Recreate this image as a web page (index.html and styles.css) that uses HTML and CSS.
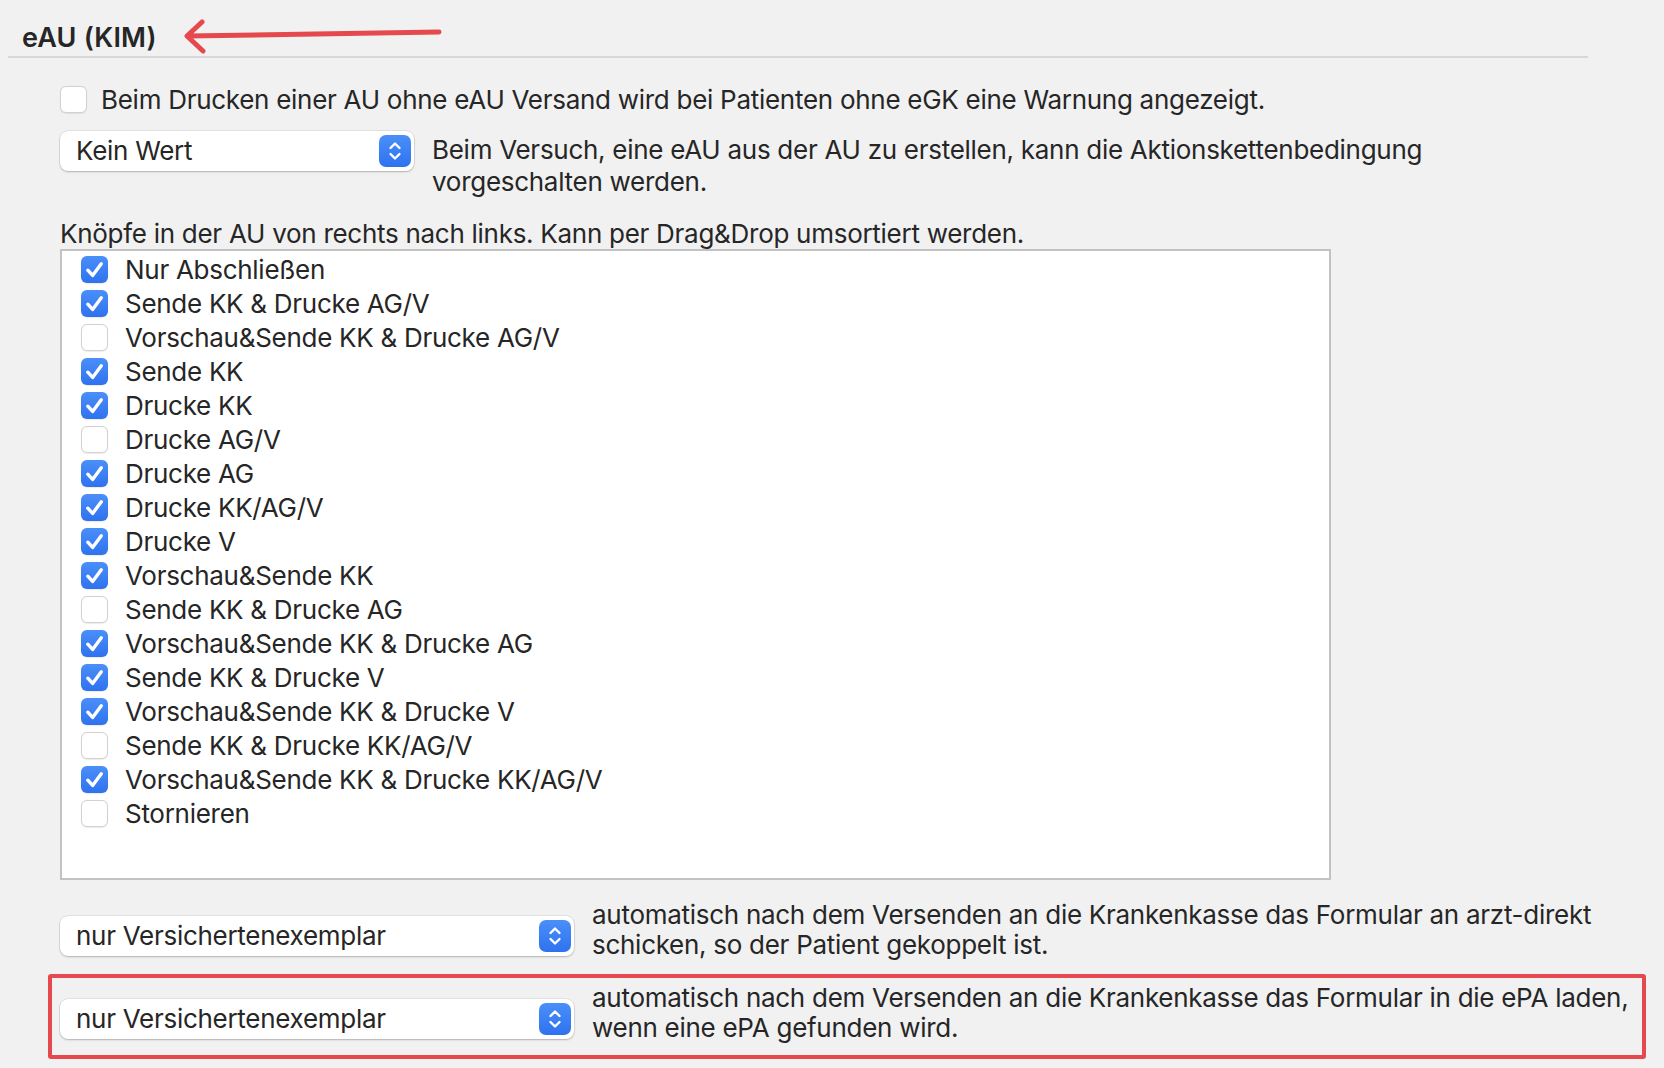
FILE: index.html
```html
<!DOCTYPE html>
<html>
<head>
<meta charset="UTF-8"/>
<title>eAU (KIM)</title>
<link rel="stylesheet" href="styles.css">
</head>
<body>
<div class="pane">

<div class="section-head">
    <h2 class="section-title">eAU (KIM)</h2>
    <svg class="callout-arrow" width="265" height="38" viewBox="0 0 265 38">
        <path d="M257 14 L5 18 M20 4 L5 18 L21 33" fill="none" stroke="#e5484d" stroke-width="5" stroke-linecap="round" stroke-linejoin="round"/>
    </svg>
</div>

<div class="section-body">
    <label class="check-row">
        <span class="box"></span>
        <span>Beim Drucken einer AU ohne eAU Versand wird bei Patienten ohne eGK eine Warnung angezeigt.</span>
    </label>

    <div class="field-row first-field">
        <div class="select select-short">
            <span>Kein Wert</span>
            <span class="stepper"><svg width="14" height="22" viewBox="0 0 14 22"><path d="M2.5 8 L7 3.5 L11.5 8 M2.5 14 L7 18.5 L11.5 14" fill="none" stroke="#fff" stroke-width="2.4" stroke-linecap="round" stroke-linejoin="round"/></svg></span>
        </div>
        <p class="hint hint-narrow">Beim Versuch, eine eAU aus der AU zu erstellen, kann die Aktionskettenbedingung vorgeschalten werden.</p>
    </div>

    <p class="list-caption">Knöpfe in der AU von rechts nach links. Kann per Drag&amp;Drop umsortiert werden.</p>
    <ul class="button-list">
        <li><span class="box on"></span>Nur Abschließen</li>
        <li><span class="box on"></span>Sende KK &amp; Drucke AG/V</li>
        <li><span class="box"></span>Vorschau&amp;Sende KK &amp; Drucke AG/V</li>
        <li><span class="box on"></span>Sende KK</li>
        <li><span class="box on"></span>Drucke KK</li>
        <li><span class="box"></span>Drucke AG/V</li>
        <li><span class="box on"></span>Drucke AG</li>
        <li><span class="box on"></span>Drucke KK/AG/V</li>
        <li><span class="box on"></span>Drucke V</li>
        <li><span class="box on"></span>Vorschau&amp;Sende KK</li>
        <li><span class="box"></span>Sende KK &amp; Drucke AG</li>
        <li><span class="box on"></span>Vorschau&amp;Sende KK &amp; Drucke AG</li>
        <li><span class="box on"></span>Sende KK &amp; Drucke V</li>
        <li><span class="box on"></span>Vorschau&amp;Sende KK &amp; Drucke V</li>
        <li><span class="box"></span>Sende KK &amp; Drucke KK/AG/V</li>
        <li><span class="box on"></span>Vorschau&amp;Sende KK &amp; Drucke KK/AG/V</li>
        <li><span class="box"></span>Stornieren</li>
    </ul>

    <div class="field-row wide-field">
        <div class="select select-long">
            <span>nur Versichertenexemplar</span>
            <span class="stepper"><svg width="14" height="22" viewBox="0 0 14 22"><path d="M2.5 8 L7 3.5 L11.5 8 M2.5 14 L7 18.5 L11.5 14" fill="none" stroke="#fff" stroke-width="2.4" stroke-linecap="round" stroke-linejoin="round"/></svg></span>
        </div>
        <p class="hint">automatisch nach dem Versenden an die Krankenkasse das Formular an arzt-direkt schicken, so der Patient gekoppelt ist.</p>
    </div>

    <div class="marked">
        <div class="field-row wide-field">
            <div class="select select-long">
                <span>nur Versichertenexemplar</span>
                <span class="stepper"><svg width="14" height="22" viewBox="0 0 14 22"><path d="M2.5 8 L7 3.5 L11.5 8 M2.5 14 L7 18.5 L11.5 14" fill="none" stroke="#fff" stroke-width="2.4" stroke-linecap="round" stroke-linejoin="round"/></svg></span>
            </div>
            <p class="hint">automatisch nach dem Versenden an die Krankenkasse das Formular in die ePA laden, wenn eine ePA gefunden wird.</p>
        </div>
    </div>
</div>

</div>
</body>
</html>
```

FILE: styles.css
```css
* {
    box-sizing: border-box;
}
body {
    margin: 0;
    background: #f1f1f1;
    color: #262626;
    font-family: Inter, "Noto Sans", sans-serif;
    font-size: 26px;
    letter-spacing: -0.28px;
    overflow: hidden;
}
.pane {
    padding-left: 8px;
}

/* section header with the red callout */
.section-head {
    position: relative;
    width: 1580px;
    padding: 22px 0 3px 14px;
    border-bottom: 2px solid #d7d7d7;
}
.section-title {
    margin: 0;
    font-size: 27px;
    font-weight: 600;
    line-height: 31px;
    letter-spacing: 0.2px;
}
.callout-arrow {
    position: absolute;
    left: 174px;
    top: 18px;
}

.section-body {
    padding-left: 52px;
}

/* checkboxes */
.box {
    flex: none;
    width: 27px;
    height: 27px;
    border-radius: 6px;
    background: #fff;
    border: 1px solid #d2d2d2;
    box-shadow: 0 0.5px 1px rgba(0, 0, 0, 0.08);
}
.box.on {
    border: none;
    background-image: url("data:image/svg+xml,%3Csvg xmlns='http://www.w3.org/2000/svg' width='27' height='27'%3E%3Cpath d='M6.8 14.2 L11.6 19.4 L20.3 7.8' fill='none' stroke='white' stroke-width='3.4' stroke-linecap='round' stroke-linejoin='round'/%3E%3C/svg%3E"), linear-gradient(#4a8ff9, #2f72ef);
}
.check-row {
    display: flex;
    align-items: center;
    gap: 14px;
    margin-top: 26px;
    line-height: 31px;
}

/* popup buttons */
.field-row {
    display: flex;
    align-items: flex-start;
    gap: 18px;
}
.first-field {
    margin-top: 16px;
}
.select {
    flex: none;
    display: flex;
    align-items: center;
    justify-content: space-between;
    height: 40px;
    padding: 0 3px 2px 16px;
    background: #fff;
    border-radius: 8px;
    box-shadow: 0 0 0 0.5px rgba(0, 0, 0, 0.12), 0 1px 2px rgba(0, 0, 0, 0.22);
}
.select-short {
    width: 354px;
}
.select-long {
    width: 514px;
}
.stepper {
    display: flex;
    align-items: center;
    justify-content: center;
    width: 32px;
    height: 32px;
    margin-top: 2px;
    border-radius: 7px;
    background: linear-gradient(#4a8ff9, #2f72ef);
}
.hint {
    margin: 0;
    flex: 1;
    line-height: 30px;
}
.first-field .hint {
    margin-top: 3px;
    line-height: 32px;
}
.hint-narrow {
    flex: none;
    max-width: 1040px;
}
.wide-field {
    width: 1582px;
}
.wide-field .select {
    margin-top: 16px;
}

/* reorderable list */
.list-caption {
    margin: 20px 0 0;
    line-height: 31px;
}
.button-list {
    list-style: none;
    margin: 0 0 20px;
    padding: 1px 0 0 19px;
    width: 1271px;
    height: 631px;
    background: #fff;
    border: 2px solid #c2c2c2;
}
.button-list li {
    display: flex;
    align-items: center;
    gap: 17px;
    height: 34px;
}

/* red highlight from the screenshot annotation */
.marked {
    margin: 14px 0 0 -12px;
    width: 1598px;
    padding: 5px 0 12px 8px;
    border: 4px solid #e5484d;
    border-radius: 3px;
}
```
